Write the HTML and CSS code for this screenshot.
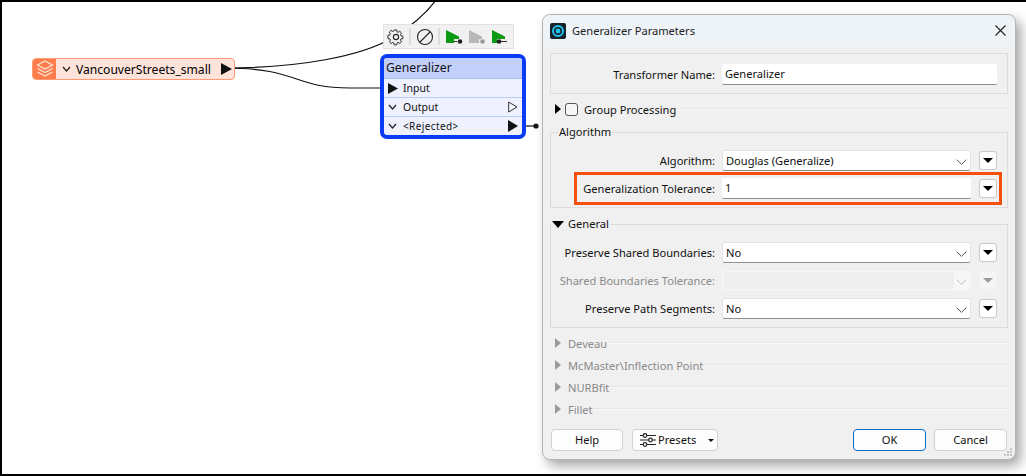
FILE: index.html
```html
<!DOCTYPE html>
<html lang="en">
<head>
<meta charset="utf-8">
<title>Generalizer Parameters</title>
<link rel="stylesheet" href="styles.css">
</head>
<body>
<main class="canvas">
  <svg class="wires" width="1026" height="476" viewBox="0 0 1026 476" fill="none" stroke="#111" stroke-width="1.2">
    <path d="M224 68C300 68 362 56 392 38C410 27 426 14 436 0"/>
    <path d="M224 68C300 68 292 88 350 88L392 88"/>
    <path d="M514 126H536"/>
    <circle cx="536" cy="126" r="2" fill="#111"/>
  </svg>

  <div class="source">
    <span class="source-icon">
      <svg width="20" height="20" viewBox="0 0 20 20" fill="none" stroke="#ffe6d8" stroke-width="1.2"><path d="M10 2l7.500 4-7.500 4-7.500-4z"/><path d="M2.500 9.500l7.500 4 7.500-4"/><path d="M2.500 13l7.500 4 7.500-4"/></svg>
    </span>
    <svg class="chev" width="9" height="6" viewBox="0 0 9 6" fill="none" stroke="#222" stroke-width="1.2"><path d="M1 1l3.500 4L8 1"/></svg>
    <span class="source-name">VancouverStreets_small</span>
    <svg class="port" width="11" height="12" viewBox="0 0 11 12"><path d="M0 0l11 6-11 6z" fill="#111"/></svg>
  </div>

  <div class="toolbar">
    <span class="tool">
      <svg width="18" height="18" viewBox="0 0 18 18" fill="none" stroke="#222" stroke-width="1.100"><path d="M7.600 1.500h2.800l.4 2.200 1.300.6 1.900-1.200 2 2-1.200 1.900.6 1.300 2.200.4v2.800l-2.200.4-.6 1.300 1.200 1.900-2 2-1.900-1.200-1.300.6-.4 2.200H7.600l-.4-2.200-1.300-.6-1.900 1.200-2-2 1.200-1.900-.6-1.300-2.200-.4V7.700l2.200-.4.6-1.300L2 4.100l2-2 1.900 1.200 1.300-.6z" transform="translate(.6 .6) scale(.87)"/><circle cx="9" cy="9" r="2.600"/></svg>
    </span>
    <span class="tool-sep"></span>
    <span class="tool">
      <svg width="18" height="18" viewBox="0 0 18 18" fill="none" stroke="#222" stroke-width="1.100"><circle cx="9" cy="9" r="7.500"/><path d="M4 14L14 4"/></svg>
    </span>
    <span class="tool-sep"></span>
    <span class="tool">
      <svg width="18" height="16" viewBox="0 0 18 16"><path d="M1 1l13 6.500V10H9v4H1z" fill="#0c9a12"/><path d="M9 12.500h3" stroke="#333"/><circle cx="15" cy="12.500" r="2.300" fill="#222"/></svg>
    </span>
    <span class="tool">
      <svg width="18" height="16" viewBox="0 0 18 16"><path d="M1 1l13 6.500V10h-3v4H1z" fill="#b8b8b8"/><circle cx="14.500" cy="12.500" r="2.300" fill="#9a9a9a"/></svg>
    </span>
    <span class="tool">
      <svg width="18" height="16" viewBox="0 0 18 16"><path d="M1 1l13 6.500V10H6v4H1z" fill="#0c9a12"/><circle cx="8" cy="12.500" r="2.300" fill="#222"/><path d="M10 12.500h6" stroke="#333"/></svg>
    </span>
  </div>

  <div class="transformer">
    <div class="t-title">Generalizer</div>
    <div class="t-row">
      <svg class="t-in" width="10" height="11" viewBox="0 0 10 11"><path d="M0 0l10 5.500L0 11z" fill="#111"/></svg>
      <span class="t-label">Input</span>
    </div>
    <div class="t-row">
      <svg class="t-chev" width="9" height="6" viewBox="0 0 9 6" fill="none" stroke="#222" stroke-width="1.200"><path d="M1 1l3.500 4L8 1"/></svg>
      <span class="t-label">Output</span>
      <svg class="t-out" width="10" height="12" viewBox="0 0 10 12"><path d="M.7 1l8.300 5-8.300 5z" fill="#f3f5ff" stroke="#333"/></svg>
    </div>
    <div class="t-row t-row-last">
      <svg class="t-chev" width="9" height="6" viewBox="0 0 9 6" fill="none" stroke="#222" stroke-width="1.200"><path d="M1 1l3.500 4L8 1"/></svg>
      <span class="t-label t-small">&lt;Rejected&gt;</span>
      <svg class="t-out" width="10" height="12" viewBox="0 0 10 12"><path d="M0 0l10 6-10 6z" fill="#111"/></svg>
    </div>
  </div>

  <section class="dialog">
    <header class="titlebar">
      <span class="app-icon"><svg width="16" height="16" viewBox="0 0 16 16"><rect width="16" height="16" rx="2" fill="#16222b"/><circle cx="8" cy="8" r="5" fill="none" stroke="#1fc4ee" stroke-width="2"/><circle cx="8" cy="8" r="2.400" fill="#1fc4ee"/></svg></span>
      <span class="title-text">Generalizer Parameters</span>
      <svg class="close" width="11" height="11" viewBox="0 0 11 11" fill="none" stroke="#222" stroke-width="1.100"><path d="M.5.500l10 10M10.500.500l-10 10"/></svg>
    </header>

    <div class="body">
      <div class="box box-name">
        <span class="lbl">Transformer Name:</span>
        <span class="input input-long">Generalizer</span>
      </div>

      <div class="section sec-group">
        <span class="tri-right dark"></span>
        <span class="check"></span>
        <span class="sec-name">Group Processing</span>
        <span class="rule"></span>
      </div>

      <fieldset class="box box-alg">
        <legend class="legend">Algorithm</legend>
        <div class="row">
          <span class="lbl">Algorithm:</span>
          <span class="combo">Douglas (Generalize)<svg class="combo-arrow" width="11" height="6" viewBox="0 0 11 6" fill="none" stroke="#555"><path d="M.7.700l4.800 4.600L10.300.700"/></svg></span>
          <span class="mini"><i></i></span>
        </div>
        <div class="row">
          <span class="highlight"></span>
          <span class="lbl">Generalization Tolerance:</span>
          <span class="input input-short">1</span>
          <span class="mini"><i></i></span>
        </div>
      </fieldset>

      <fieldset class="box box-gen">
        <legend class="legend legend-tri"><span class="tri-down"></span>General</legend>
        <div class="row">
          <span class="lbl">Preserve Shared Boundaries:</span>
          <span class="combo">No<svg class="combo-arrow" width="11" height="6" viewBox="0 0 11 6" fill="none" stroke="#555"><path d="M.7.700l4.800 4.600L10.300.700"/></svg></span>
          <span class="mini"><i></i></span>
        </div>
        <div class="row row-off">
          <span class="lbl">Shared Boundaries Tolerance:</span>
          <span class="combo combo-off"><span class="combo-fill"></span><svg class="combo-arrow" width="11" height="6" viewBox="0 0 11 6" fill="none" stroke="#bbb"><path d="M.7.700l4.800 4.600L10.300.700"/></svg></span>
          <span class="mini mini-off"><i></i></span>
        </div>
        <div class="row">
          <span class="lbl">Preserve Path Segments:</span>
          <span class="combo">No<svg class="combo-arrow" width="11" height="6" viewBox="0 0 11 6" fill="none" stroke="#555"><path d="M.7.700l4.800 4.600L10.300.700"/></svg></span>
          <span class="mini"><i></i></span>
        </div>
      </fieldset>

      <div class="collapsed">
        <div class="section"><span class="tri-right"></span><span class="sec-name">Deveau</span><span class="rule"></span></div>
        <div class="section"><span class="tri-right"></span><span class="sec-name">McMaster\Inflection Point</span><span class="rule"></span></div>
        <div class="section"><span class="tri-right"></span><span class="sec-name">NURBfit</span><span class="rule"></span></div>
        <div class="section"><span class="tri-right"></span><span class="sec-name">Fillet</span><span class="rule"></span></div>
      </div>

      <footer class="buttons">
        <span class="btn btn-help">Help</span>
        <span class="btn btn-presets">
          <svg width="16" height="14" viewBox="0 0 16 14" fill="none" stroke="#222" stroke-width="1.200"><path d="M0 2.500h16M0 7h16M0 11.500h16"/><circle cx="5" cy="2.500" r="1.800" fill="#fff"/><circle cx="10.500" cy="7" r="1.800" fill="#fff"/><circle cx="5" cy="11.500" r="1.800" fill="#fff"/></svg>
          <span>Presets</span>
          <i class="caret"></i>
        </span>
        <span class="spacer"></span>
        <span class="btn btn-ok">OK</span>
        <span class="btn btn-cancel">Cancel</span>
      </footer>
    </div>
    <svg class="grip" width="9" height="9" viewBox="0 0 9 9" fill="#c4c4c4"><rect x="6" y="0" width="2" height="2"/><rect x="3" y="3" width="2" height="2"/><rect x="6" y="3" width="2" height="2"/><rect x="0" y="6" width="2" height="2"/><rect x="3" y="6" width="2" height="2"/><rect x="6" y="6" width="2" height="2"/></svg>
  </section>
</main>
</body>
</html>
```

FILE: styles.css
```css
* { box-sizing: border-box; }
html, body { margin: 0; padding: 0; }
body { width: 1026px; height: 476px; overflow: hidden; background: #fff; font-family: "Noto Sans", "Open Sans", sans-serif; font-size: 11.100px; color: #111; }

.canvas { position: relative; width: 1026px; height: 476px; border: solid #000; border-width: 2px 0 2px 2px; overflow: hidden; background: #fff; }
.wires { position: absolute; left: -2px; top: -2px; }

/* Source feature type node */
.source { position: absolute; left: 30px; top: 56px; width: 203px; height: 22px; display: flex; align-items: center; background: #fde3da; border: 1px solid #ff9a75; border-radius: 4px; overflow: hidden; }
.source-icon { width: 23px; height: 20px; flex: none; display: flex; align-items: center; justify-content: center; background: #ff7d4d; }
.chev { margin-left: 6px; flex: none; }
.source-name { margin-left: 5px; font-size: 12.100px; color: #000; white-space: nowrap; }
.port { margin-left: auto; margin-right: 2px; flex: none; }

/* Toolbar above the transformer */
.toolbar { position: absolute; left: 381px; top: 22px; width: 131px; height: 25px; display: flex; align-items: center; background: #f1f1f1; border: 1px solid #e2e2e2; }
.tool { width: 23px; height: 22px; display: flex; align-items: center; justify-content: center; flex: none; }
.tool-sep { width: 2px; height: 17px; margin: 0 2px; background: #dcdcdc; flex: none; }

/* Transformer node */
.transformer { position: absolute; left: 378px; top: 52px; width: 146px; height: 85px; display: flex; flex-direction: column; background: #eff2fe; border: 4px solid #0a3cf5; border-radius: 7px; overflow: hidden; }
.t-title { height: 21px; flex: none; padding-left: 2px; line-height: 20px; font-size: 12.200px; color: #111; background: #c3cffb; border-bottom: 1px solid #a9bdf0; }
.t-row { position: relative; flex: 1; display: flex; align-items: center; padding-left: 19px; border-bottom: 1px solid #bccbf4; font-size: 10.500px; }
.t-row-last { border-bottom: 0; }
.t-in { position: absolute; left: 4px; top: 4px; }
.t-chev { position: absolute; left: 4px; top: 6px; }
.t-out { position: absolute; right: 4px; top: 3px; }
.t-small { font-size: 10px; letter-spacing: .4px; }

/* Dialog window */
.dialog { position: absolute; left: 540px; top: 12px; width: 474px; height: 446px; display: flex; flex-direction: column; background: #f0f0f0; border: 1px solid #b5b5b5; border-radius: 8px; box-shadow: 5px 6px 12px rgba(0,0,0,.35); }
.titlebar { height: 31px; flex: none; display: flex; align-items: center; padding: 0 9px 0 7px; background: #eef3f8; border-radius: 8px 8px 0 0; }
.app-icon { width: 16px; height: 16px; flex: none; display: flex; }
.title-text { margin-left: 6px; color: #222; }
.close { margin-left: auto; }

.body { flex: 1; display: flex; flex-direction: column; padding: 7px 7px 0 7px; min-height: 0; }
.box { border: 1px solid #dcdcdc; margin: 0; padding: 0; min-width: 0; }
.box-name { height: 41px; display: flex; align-items: center; padding-top: 2px; flex: none; }
.lbl { width: 164px; flex: none; text-align: right; white-space: nowrap; color: #111; }
.input { height: 21px; line-height: 20px; background: #fff; border-bottom: 1px solid #8f8f8f; border-radius: 2px; padding-left: 3px; margin-left: 7px; color: #111; flex: none; }
.input-long { width: 275px; }
.input-short { width: 249px; }

.section { display: flex; align-items: center; height: 22px; }
.sec-group { margin-top: 4px; }
.tri-right { width: 0; height: 0; border-left: 6px solid #9a9a9a; border-top: 5.500px solid transparent; border-bottom: 5.500px solid transparent; margin-left: 5px; flex: none; }
.tri-right.dark { border-left-color: #000; }
.check { width: 13px; height: 13px; border: 1px solid #555; border-radius: 3px; background: #f7f7f7; margin-left: 4px; flex: none; }
.sec-name { margin-left: 6px; white-space: nowrap; color: #111; }
.rule { flex: 1; height: 2px; margin-left: 1px; background: #fafafa; border-top: 1px solid #e4e4e4; }

.legend { padding: 0 1px; margin-left: 7px; color: #111; line-height: 16px; }
.legend-tri { margin-left: 0; display: flex; align-items: center; }
.tri-down { width: 0; height: 0; border-top: 7px solid #000; border-left: 6px solid transparent; border-right: 6px solid transparent; margin-right: 4px; }

.box-alg { margin-top: 4px; height: 84px; padding-top: 6px; flex: none; }
.box-gen { margin-top: 8px; height: 112px; padding-top: 6px; flex: none; }

.row { position: relative; height: 28px; display: flex; align-items: center; flex: none; }
.combo { position: relative; width: 249px; height: 21px; line-height: 19px; margin-left: 7px; padding-left: 3px; background: #fff; border: 1px solid #e4e4e4; border-bottom-color: #8f8f8f; border-radius: 3px; flex: none; color: #111; }
.combo-arrow { position: absolute; right: 3px; top: 8px; }
.combo-off { background: #f7f7f7; border-color: #f2f2f2; padding: 1px; }
.combo-fill { display: block; width: 230px; height: 17px; background: #efefef; }
.mini { width: 18px; height: 19px; margin-left: 8px; display: flex; align-items: center; justify-content: center; background: #fff; border: 1px solid #c9c9c9; border-radius: 3px; flex: none; }
.mini i { width: 0; height: 0; border-top: 5px solid #000; border-left: 5px solid transparent; border-right: 5px solid transparent; }
.mini-off { background: #f5f5f5; border-color: #efefef; }
.mini-off i { border-top-color: #9c9c9c; }
.row-off .lbl { color: #8a8a8a; }

.highlight { position: absolute; left: 23px; top: -2px; width: 428px; height: 33px; border: 3px solid #f6500f; pointer-events: none; }

.collapsed { margin-top: 4px; flex: none; }
.collapsed .sec-name { color: #8a8a8a; margin-left: 7px; }

.buttons { display: flex; align-items: center; margin-top: 9px; padding: 0 1px; }
.btn { width: 72px; height: 22px; line-height: 20px; text-align: center; background: #fdfdfd; border: 1px solid #d0d0d0; border-radius: 4px; color: #111; flex: none; }
.btn-presets { width: 86px; margin-left: 9px; display: flex; align-items: center; padding-left: 7px; gap: 2px; }
.caret { width: 0; height: 0; margin-left: 10px; border-top: 3px solid #111; border-left: 3px solid transparent; border-right: 3px solid transparent; }
.spacer { flex: 1; }
.btn-ok { width: 73px; border-color: #0a6cc4; }
.btn-cancel { width: 73px; margin-left: 8px; }
.grip { position: absolute; right: 2px; bottom: 2px; }
```
